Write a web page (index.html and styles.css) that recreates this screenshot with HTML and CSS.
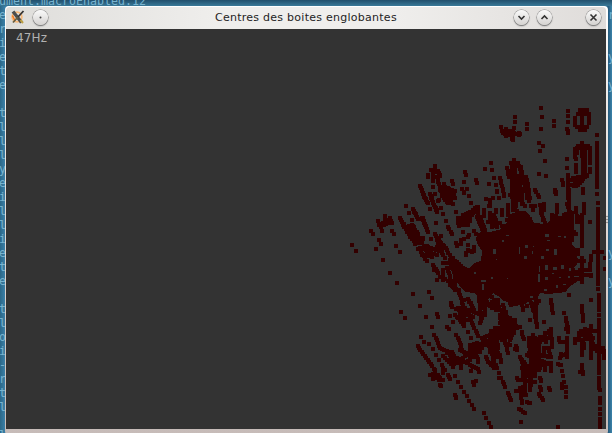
FILE: index.html
```html
<!DOCTYPE html>
<html lang="fr">
<head>
<meta charset="utf-8">
<title>Centres des boites englobantes</title>
<link rel="stylesheet" href="styles.css">
</head>
<body>
<div class="desktop">
<pre class="terminal terminal-top">ument.macroEnabled.12</pre>
<pre class="terminal terminal-left">e
r
i
e
t
e

t
l
l
l
y
e
i
l
l
i
e
t
e

t
l
o
i
-
r
t
l

l</pre>
<pre class="terminal terminal-right">
r


y

y











y

y</pre>
<main class="window">
<header class="titlebar">
<svg class="logo" width="16" height="16" viewBox="0 0 16 16"><circle cx="7" cy="8" r="4.8" fill="none" stroke="#f8b878" stroke-width="1.8"/><path d="M2.5 6.500l2.500 5" stroke="#f47b20" stroke-width="1.6"/><path d="M3 2.500l8.500 11" stroke="#4d4d4d" stroke-width="3.4"/><path d="M13.500 2L8 8" stroke="#333" stroke-width="1.8"/><path d="M8 8l-5 5.500" stroke="#665d40" stroke-width="1.8"/><path d="M10.500 11l2.500 3" stroke="#bda044" stroke-width="2"/></svg>
<span class="button menu"><svg width="15" height="15"><circle cx="7.5" cy="7.5" r="1" fill="#444"/></svg></span>
<h1>Centres des boites englobantes</h1>
<span class="button down"><svg width="15" height="15"><path d="M4.5 6l3 3 3-3"/></svg></span>
<span class="button up"><svg width="15" height="15"><path d="M4.5 9l3-3 3 3"/></svg></span>
<span class="button close"><svg width="15" height="15"><path d="M4.5 4.5l6 6m0-6l-6 6"/></svg></span>
</header>
<section class="view">
<span class="rate">47Hz</span>
<svg class="cloud" width="600" height="400" viewBox="6 29 600 400" shape-rendering="crispEdges"><path id="mass"/><path id="points"/><path id="gaps"/></svg>
</section>
</main>
<i class="grip"></i>
</div>
<script src="cloud.js"></script>
</body>
</html>
```
FILE: styles.css
```css
* { box-sizing: border-box; }
body { margin: 0; overflow: hidden; }
.desktop {
  position: relative;
  width: 612px;
  height: 433px;
  overflow: hidden;
  background: linear-gradient(90deg, #2c6888, #397fa7 5px, #397fa7 606px, #265879 608px, #3b84ab 612px);
}
.desktop::before {
  content: "";
  position: absolute;
  inset: 0 0 auto;
  height: 6px;
  background: linear-gradient(#214f6c, #397998);
}
.terminal {
  position: absolute;
  margin: 0;
  color: #78b4d0;
  font: 11.63px/14px "DejaVu Sans Mono", monospace;
}
.terminal-top { left: -1px; top: -6px; }
.terminal-left { left: -1px; top: 8px; }
.terminal-right { left: 608px; top: 8px; }
.window {
  position: relative;
  width: 603px;
  height: 428px;
  margin: 6px 0 0 5px;
  padding: 0 2px 5px 1px;
  border-radius: 4px 4px 3px 3px;
  background: linear-gradient(#fff, #eeeae7 100px, #c6bbb8);
}
.titlebar {
  display: flex;
  align-items: center;
  height: 23px;
  padding: 0 5px 2px 4px;
  border-top: 1px solid #fff;
  border-radius: 4px 4px 0 0;
  background: linear-gradient(90deg, #deddda, #efeeec 35%, #efeeec 65%, #dfdcda);
}
.logo { flex: none; }
.button {
  flex: none;
  width: 15px;
  height: 15px;
  border-radius: 50%;
  background: linear-gradient(#fafafa, #d5d3d1);
  box-shadow: 0 0 0 .5px #888, 0 1px 1.5px #666;
}
.button svg { display: block; }
.button path { fill: none; stroke: #333; stroke-width: 1.6; }
.menu { margin-left: 7px; }
.down { margin-right: 8px; }
.up { margin-right: 34px; }
h1 {
  flex: 1;
  margin: 0;
  padding: 1px 0 0 167px;
  color: #242424;
  font: 11px/20px "DejaVu Sans", sans-serif;
  letter-spacing: .26px;
  white-space: nowrap;
}
.view {
  display: grid;
  width: 600px;
  height: 400px;
  overflow: hidden;
  background: #333;
}
.rate, .cloud { grid-area: 1 / 1; }
.rate {
  padding: 1px 10px;
  color: #b1b1b1;
  font: 12px/16px "DejaVu Sans", sans-serif;
  letter-spacing: .15px;
}
.cloud { display: block; }
#points, #mass { fill: #300; }
#gaps { fill: #333; }
.grip {
  position: absolute;
  left: 606px;
  top: 215px;
  width: 2px;
  height: 9px;
  background: repeating-linear-gradient(#d8d2cf 0 1px, #999390 1px 2px, #d8d2cf 2px 3px);
}
```
FILE: cloud.js
```js
// Each tile: origin, then centres at a third of a pixel; "-" joins a streak.
const tiles = [
[340,150,`36,285 48,303 93,243 99,252 117,270 123,282 108,297 168,288 180,306 156,243 162,252
198,168 207,189 216,210 135,198 114,213 116,226-150,205 124,230-154,213 135,205-148,218 126,243
180,204-186,216-204,243-215,265 219,177-228,195-234,207-246,204-264,246 200,232-215,226-228,250-234,254 210,240-220,260 218,228-218,265
240,107-252,135-258,150 264,159 270,177 264,74-264,81 285,48-285,65 273,60-295,63-300,76 279,65-279,93 290,80-300,110-306,138-324,160 279,111
270,132-277,150-291,186 285,132 294,153 303,174 309,192 312,102-326,140 310,125-324,150 288,219 318,213 324,231 240,266-249,266 273,267 226,279 129,330`],
[440,90,`225,81 225,96 261,102 261,117 183,111 186,123-198,138 194,124-206,126 198,118-198,136 206,122-206,134 198,130-210,136 221,114-217,148 216,126-237,135 237,128 219,150
153,219 156,240 135,237 75,246 78,255 0,257 36,273 39,282 12,282 72,276 66,297 72,309 81,297 87,318 108,270 111,279 162,264 147,282 168,285 171,303 138,327 159,324 177,323
180,264-186,288-192,318 222,210-222,228 213,220-234,220-252,280-264,324 201,234-207,260 215,225-215,300-218,324 225,225-228,288 228,260-240,290-234,324 240,235-246,258 258,262-264,290 240,270-240,320 219,286-225,324
12,294-36,300-44,324 6,306-39,309 6,318-42,324 24,295-24,324 0,300`],
[520,90,`63,54 66,81 63,117 102,93 102,107 21,102 21,117 0,132 57,159 69,168 60,183 75,213 57,252 78,258 144,63 144,78 144,96 141,117-144,128
180,60-201,60 173,71-207,72 165,84-165,105 207,78-207,98 171,110-200,110 180,120-195,120 186,78-186,108
186,159 174,168-204,168 165,177-165,201 171,174-171,188 180,174-209,174 209,180-209,218 186,180-190,250 195,174-195,250 168,208 168,225-168,245 141,207 141,234
209,236-209,245 200,255-180,279-150,285 159,265-200,258 145,255-145,324 153,270-183,270 126,270-129,285 150,285-168,288-180,280 189,297-189,308 104,300-108,312 231,135 231,158-231,290 231,313
3,230-6,260-30,324 0,258-18,285-21,324 0,280-6,324 12,270-27,300 45,300-57,321`],
[390,190,`96,3-110,36 120,12-126,30-140,61 135,12 147,30 120,57 114,39 153,55 159,72 138,99 168,93 174,111-186,132 198,66 222,6 237,18 243,39 48,48 57,69 66,90 150,0-168,30-190,42 165,5-180,30 180,0-180,36 195,3-180,36 165,12-195,24
0,90 6,99 12,132 6,123 18,168 30,186 0,249 21,279 69,312 126,324 117,306 90,348
30,84-42,110-60,140-76,161 69,57-84,87-98,84-114,126 50,125-66,105-84,132 60,110-66,140-78,132 66,124-81,146 94,145-100,145 123,147 84,160-96,160-120,196 84,178-105,170-155,184 93,186-110,212 100,178-140,195 95,195-126,200 110,168-110,195 135,132-150,156 153,138 141,150-160,195 153,160-168,174-186,210 166,204 140,171-159,171 130,224-140,242 132,240 144,248 159,219 171,218 183,222 141,270 150,260-195,285 160,240-160,270 170,234-190,290 190,205-220,245 180,210-210,240 190,230-230,270 200,216-240,250 180,285-204,300
203,84-206,108 210,90-260,50-264,78 220,75-264,65 218,105-250,70 215,94-240,94 210,105-235,105 219,125 237,135 252,123 258,132 234,141 198,159-201,168 214,150-214,162 222,147 234,165 252,170 252,183 228,190 234,180-245,187 228,195
260,80-280,124 270,80-285,120 282,60-282,78 300,69 294,95 312,75-318,90 300,39-300,48 288,27 309,24 318,66 306,84-318,108 320,3 300,93-320,105 296,48 264,50-264,80
206,300-222,354 195,255-195,300 235,327-252,360 204,354-220,354 246,351 266,310-270,355 279,327-285,354 290,340-306,354 306,321 318,330 324,354 182,339-186,350`],
[490,190,`0,30 9,24 27,24 21,5 39,3 0,47 18,60 36,60-36,75 54,45-54,66 69,9-69,60 78,0-78,48 84,0-90,30-105,48 96,5-96,42 60,15-75,30 75,60-110,80 72,75-72,120 90,69-90,120 102,72-120,88 54,75 51,90 60,78-60,93 117,0-117,33 123,48-135,48 129,60 135,0-147,21 150,45-160,90 162,42-162,60 153,69-165,98 195,0-198,12 201,45-201,66 186,75-186,96 198,78-198,102 210,85-210,110 222,75-222,105 237,0-237,100 231,42-243,72 228,72-228,102 246,69-246,150 258,54-258,65 261,78-261,96 252,126-258,132 279,6 282,42-282,70 276,75-276,168 267,80-267,96 300,96 321,12 324,39 324,57-324,282 324,297 312,186-337,186 346,205 346,237
303,198-303,210 300,222-300,236 276,204-276,276 250,180-260,186 240,210-282,213 232,240-300,240 240,252-303,255 250,267-276,267 303,258 303,331 327,315-327,357 276,348-276,358 237,315 12,87-20,110 0,80-6,110 30,100-45,120 45,108-66,108 264,180-264,192`],
[390,300,`33,36 45,54 90,18 108,51 141,42-144,50 126,81 93,111 102,126 117,132 129,147 138,165 147,180 156,195 171,81 177,87 180,48 189,66 183,9 186,17 84,138-90,150-108,174-123,192-135,214 132,105-141,120-150,145-170,152 198,105-207,120-216,150 210,150-222,155 120,226-144,226-150,234 135,210-135,230 129,238 129,223-148,240 159,204-159,220 165,210 150,255-153,258 159,240 174,225-180,237 195,228 204,246 213,261 222,276 231,288 237,303 246,315 252,327 195,285-198,294 282,339 288,354 297,369 303,381 258,243 249,247-252,256
159,168-170,180-188,200 170,158-186,155-195,174 180,165-190,190 186,180-220,174-240,155 183,192-234,183 212,198-212,204 200,175-230,190 237,160-270,155 240,140-260,130-250,170 240,135-240,180 250,140-265,185 258,144-276,144 240,195-264,208 243,213 267,216 249,201
234,96 243,114 242,60-264,108 195,45-210,60-222,78 208,30-234,30-276,45-270,70 213,38-250,52 210,50-230,60 225,25-240,51 222,0 210,39-222,70 237,6-246,18 270,33-276,55 282,18-285,45 288,0-300,18 312,0-318,30 306,18 198,27
276,115-300,130-324,160 284,110-300,105-318,115 300,105-300,155 315,84-318,120 306,96-318,105 282,120-270,140 276,135-312,138 288,170-294,186 309,155-312,200 320,150-320,170 320,204 327,219 327,234`],
[490,300,`6,6-24,18 12,0-36,36-30,70 24,0-24,15 57,0-63,15 75,0-75,12 92,0-100,30 111,18 120,0-135,42-141,80 135,15-147,3 138,0-138,45 129,12-129,30 120,60 162,65 183,0-188,39 222,40 228,54-234,95 228,87-234,80 231,114-231,170 206,114-210,126 255,117-255,129 222,126 213,162-210,175 204,192-213,195 216,213 219,228 222,246 216,252-216,264 228,261 228,276 228,291 216,165-228,162
40,15-46,45-70,65-80,84 42,30-42,75 30,45-36,84-36,120 48,36-48,110 60,54-60,110 75,60-72,100 3,93-50,100 21,84-60,87 6,105-60,105 15,96-15,130 9,120-42,108-54,160 0,130-9,180-21,204 12,130-12,195 20,118-24,144 30,165-33,186 0,190-12,204 27,219 33,234 40,246-45,260 54,279-63,300 45,129-60,135 60,120-66,105 90,80 95,96-101,117 78,138-81,150 75,147
183,87-186,141 177,93-180,111 165,100-168,126 150,111-183,114 129,105-129,125 117,114-117,135 120,114-165,120 120,126-150,126 117,138-148,138 120,150-144,150 117,160-183,171 110,165-170,190 123,129-123,255 135,115-135,220 147,120-147,210 162,145-162,160 175,145-183,170 90,171-102,200-105,285 96,180-120,210 96,204-150,204 98,216-135,216 98,228-135,228 96,240-135,246 90,264-96,310 100,260-108,285 120,200-120,270 130,195-183,192 183,190-183,212 165,190-165,210 81,234-84,240 78,274 150,234-153,243 150,261-153,270 177,264-180,270 147,283-159,300 111,305-120,310 87,327-105,340 93,366 3,381 204,381
276,18-279,62 303,0 327,0-327,30 327,45 327,60-327,219 327,234-327,264 330,270 330,294-330,309 330,327 330,342 330,357-330,370 330,382
267,99-267,114 273,93-310,93 285,87-320,93 303,78-303,87 279,105-300,105 267,120-310,114 276,120-276,165 280,126-282,144 303,108-303,174 306,123-321,153 309,135-338,145 315,147-335,155 342,153-342,174 276,195-278,222 270,215`]
];
let path = "";
const stamp = (x, y) => { path += `M${Math.round(x - 2)} ${Math.round(y - 2)}h4v4h-4z`; };
for (const [ox, oy, text] of tiles) {
  for (const streak of text.trim().split(/\s+/)) {
    const p = streak.split("-").map(s => s.split(",").map((n, i) => (i ? oy : ox) + n / 3));
    stamp(...p[0]);
    for (let i = 1; i < p.length; i++) {
      const [a, b] = [p[i - 1], p[i]];
      const n = Math.ceil(Math.hypot(b[0] - a[0], b[1] - a[1]) / 3);
      for (let k = 1; k <= n; k++) stamp(a[0] + (b[0] - a[0]) * k / n, a[1] + (b[1] - a[1]) * k / n);
    }
  }
}
document.getElementById("points").setAttribute("d", path);
const outline = "482,251 478,245 476,240 477,234 484,231 490,232 502,229 506,223 512,220 515,212 526,211 530,216 534,223 546,224 552,219 557,225 567,222 571,224 572,245 577,249 577,264 572,269 579,273 578,281 569,287 566,292 557,293 548,294 540,293 537,299 530,300 525,304 516,306 510,303 502,300 498,296 493,293 487,301 479,297 474,293 465,292 459,285 454,278 452,272 449,268 450,262 461,266 469,268 474,263 481,261";
const area = outline.split(" ").map(p => p.replace(",", " ")).join("L");
document.getElementById("mass").setAttribute("d", `M${area}z`);
// x, y, width, height of the openings inside the dense area
const gaps = "519,247,1,7 532,251,1,3 493,249,3,5 525,245,3,3 524,256,3,3 506,235,3,1 502,240,2,2 545,234,4,3 547,240,3,1 558,236,3,1 564,236,2,2 546,249,3,2 554,249,3,6 541,256,3,3 539,266,1,6 538,274,2,8 545,265,3,5 553,267,4,3 545,277,3,3 561,265,3,4 569,268,2,3 559,277,2,1 568,276,2,2 556,285,2,3 563,284,3,1 544,289,3,2 530,296,3,2 507,278,1,1 491,277,2,2 496,259,1,1 481,280,5,2 482,284,2,6 474,272,2,2 533,246,1,1 552,273,2,1 575,268,3,2 574,276,5,1";
document.getElementById("gaps").setAttribute("d", gaps.split(" ").map(g => {
  const [x, y, w, h] = g.split(",");
  return `M${x} ${y}h${w}v${h}h-${w}z`;
}).join(""));
```
